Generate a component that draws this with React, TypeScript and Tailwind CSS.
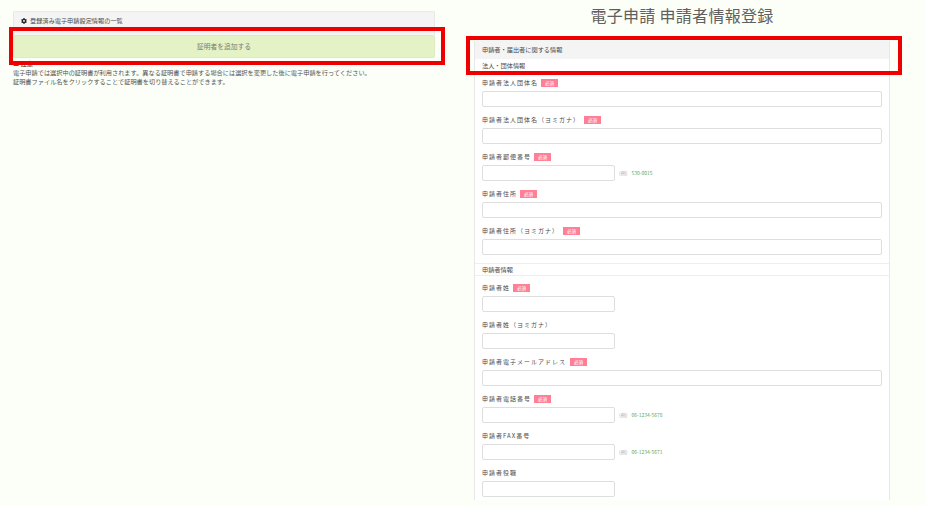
import { FaCog } from "react-icons/fa";

const font = { fontFamily: '"Noto Sans CJK JP", "Liberation Sans", sans-serif' };

function Req() {
  return <span className="ml-[3px] inline-block h-[8px] w-[17px] bg-[#ff7f96] text-center text-[4.5px] leading-[8px] tracking-normal text-white">必須</span>;
}

function Field({ label, req, extraGap, short, hint }: { label: string; req?: boolean; extraGap?: boolean; short?: boolean; hint?: string }) {
  return (
    <div className="h-[37px]">
      <div className="flex h-[12px] items-center text-[6px] leading-[12px] tracking-[1px] text-[#4a4a4a]">
        <span>{label}</span>
        {req && <span className={extraGap ? "ml-[1px] flex" : "flex"}><Req /></span>}
      </div>
      <div className="mt-[2px] flex items-center">
        <div className={(short ? "w-[133px]" : "w-[400px]") + " h-[16px] rounded-[2px] border border-[#dedede] bg-white"} />
        {hint && (
          <span className="-mt-[1px] ml-[4px] text-[5px] text-[#aaa]">
            (例)<span className="ml-[4px] text-[#5fa85f]">{hint}</span>
          </span>
        )}
      </div>
    </div>
  );
}

export default function App() {
  return (
    <div style={font} className="relative flex h-[505px] w-[926px] overflow-hidden bg-[#fcfff7]">
      <div className="ml-[13px] mt-[11px] w-[422px] shrink-0">
        <div className="flex h-[24px] items-start gap-[3px] rounded-t-[2px] border border-b-0 border-[#e8e8e8] bg-[#f4f4f4] px-[7px] pt-[4px] text-[6.2px] leading-[10px] text-[#4a4a4a]">
          <FaCog className="mt-[2px] h-[6px] w-[6px] text-[#222]" />
          <span>登録済み電子申請設定情報の一覧</span>
        </div>
        <div className="flex h-[23px] items-center justify-center rounded-[2px] border border-[#dcebc0] bg-[#e4f2c6] text-[6.75px] text-[#7a7f6f]">証明者を追加する</div>
        <div className="mt-[1px] text-[6.2px] leading-[9px] text-[#555]">
          <div className="font-bold text-[#555]">■ 注意</div>
          <div>電子申請では選択中の証明書が利用されます。異なる証明書で申請する場合には選択を変更した後に電子申請を行ってください。</div>
          <div>証明書ファイル名をクリックすることで証明書を切り替えることができます。</div>
        </div>
      </div>

      <div className="ml-[39px] w-[416px] shrink-0">
        <h1 className="h-[41px] pt-[4px] text-center text-[16px] leading-[22px] tracking-[0.3px] text-[#606060]">電子申請 申請者情報登録</h1>
        <div className="h-[459px] border-x border-[#e8e8e8] bg-white">
          <div className="flex h-[18px] items-center bg-[#f4f4f4] pl-[7px] text-[6.2px] text-[#4a4a4a]">申請者・届出者に関する情報</div>
          <div className="flex h-[13px] items-center pl-[7px] text-[6.2px] leading-[9px] text-[#4a4a4a]">法人・団体情報</div>
          <div className="px-[7px] pt-[5px]">
            <Field label="申請者法人団体名" req />
            <Field label="申請者法人団体名（ヨミガナ）" req extraGap />
            <Field label="申請者郵便番号" req short hint="530-0015" />
            <Field label="申請者住所" req />
            <Field label="申請者住所（ヨミガナ）" req extraGap />
          </div>
          <div className="mt-[1px] flex h-[13px] items-center border-y border-[#eeeeee] pl-[7px] text-[6.2px] text-[#4a4a4a]">申請者情報</div>
          <div className="px-[7px] pt-[6px]">
            <Field label="申請者姓" req short />
            <Field label="申請者姓（ヨミガナ）" short />
            <Field label="申請者電子メールアドレス" req extraGap />
            <Field label="申請者電話番号" req short hint="06-1234-5678" />
            <Field label="申請者FAX番号" short hint="06-1234-5671" />
            <Field label="申請者役職" short />
          </div>
        </div>
      </div>

      <div className="absolute left-[9px] top-[27px] h-[38px] w-[436px] border-[4px] border-[#ee0000]" />
      <div className="absolute left-[466px] top-[36px] h-[39px] w-[436px] border-[4px] border-[#ee0000]" />
    </div>
  );
}
